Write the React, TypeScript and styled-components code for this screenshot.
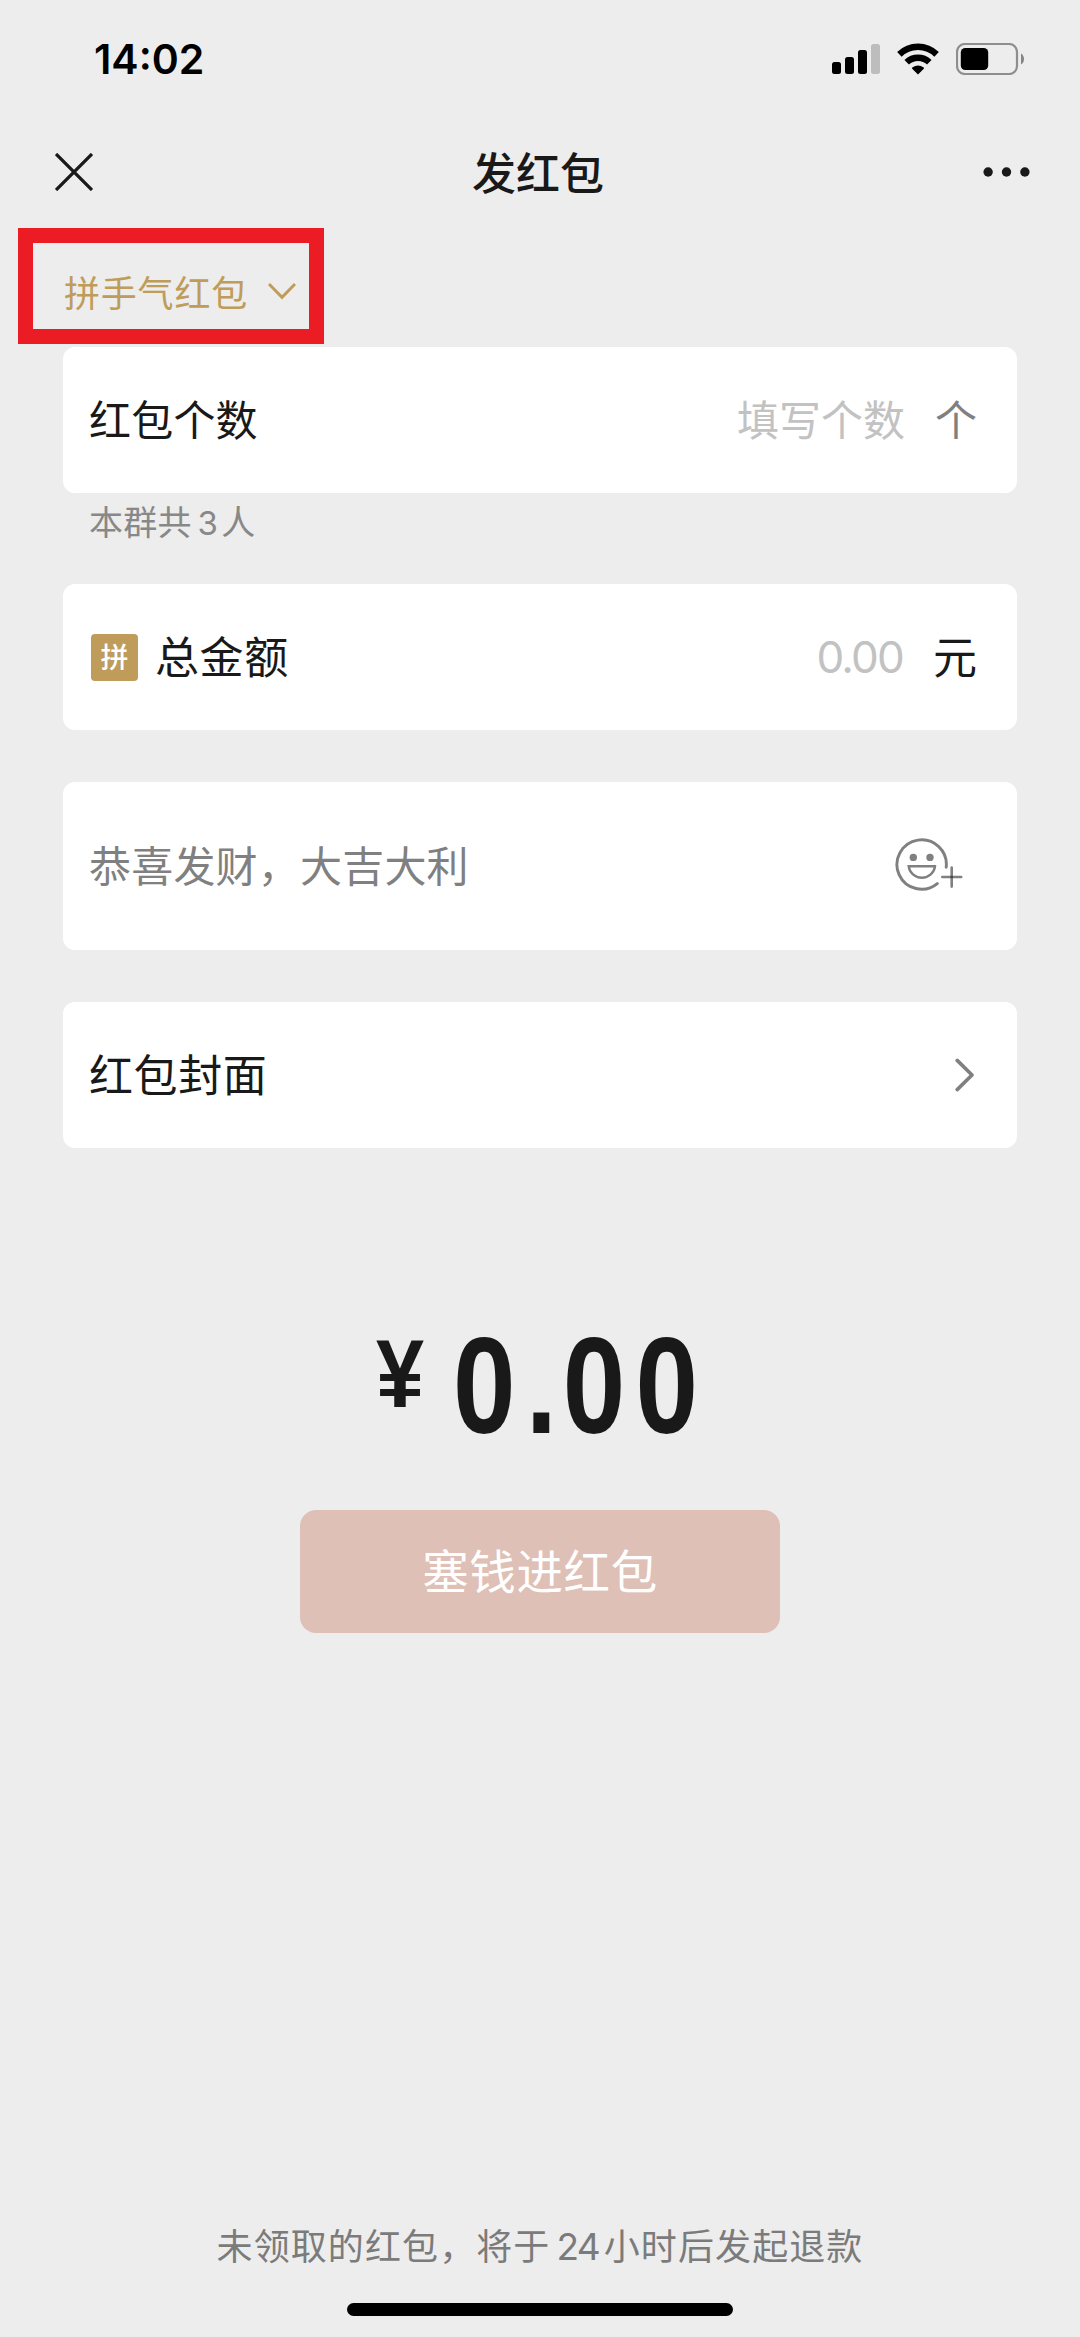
import React from 'react';
import styled, { createGlobalStyle } from 'styled-components';

const cjk = `'Noto Sans CJK SC', 'Noto Sans', sans-serif`;
const latin = `Inter, 'Liberation Sans', 'Noto Sans CJK SC', sans-serif`;

const GlobalStyle = createGlobalStyle`
  * { box-sizing: border-box; }
  html, body { margin: 0; padding: 0; background: #ededed; }
  body { font-family: ${cjk}; color: #191919; }
`;

const Screen = styled.div`
  width: 1080px;
  height: 2337px;
  display: flex;
  flex-direction: column;
  background: #ededed;
  overflow: hidden;
`;

const StatusBar = styled.header`
  height: 118px;
  padding: 0 55px 0 94px;
  display: flex;
  align-items: center;
  justify-content: space-between;
`;

const Clock = styled.time`
  font: 600 41px/50px ${latin};
  letter-spacing: 0;
  color: #000;
`;

const StatusIcons = styled.div`
  display: flex;
  align-items: center;
  gap: 17px;
  svg { display: block; }
`;

const NavBar = styled.nav`
  height: 110px;
  padding: 0 50px 2px 55px;
  display: grid;
  grid-template-columns: 1fr auto 1fr;
  align-items: center;
  svg { display: block; }
`;

const NavTitle = styled.h1`
  margin: 0;
  font-size: 44px;
  font-weight: 500;
  line-height: 60px;
  padding: 0 9px 3px 0;
`;

const NavEnd = styled.div`
  display: flex;
  justify-content: flex-end;
`;

const Content = styled.main`
  flex: 1;
  padding: 0 63px;
  display: flex;
  flex-direction: column;
`;

const TypePicker = styled.div`
  position: relative;
  height: 119px;
  padding: 6px 0 0 1px;
  display: flex;
  align-items: center;
  gap: 20px;
  color: #bf9c59;
  font-size: 36px;
  line-height: 48px;
  letter-spacing: 0.8px;
  svg { display: block; }
`;

const Highlight = styled.div`
  position: absolute;
  left: -45px;
  top: 0;
  width: 306px;
  height: 116px;
  border: 15px solid #ec1c24;
`;

const Card = styled.section<{ $height?: number; $gap?: number }>`
  height: ${p => p.$height ?? 146}px;
  margin-bottom: ${p => p.$gap ?? 52}px;
  padding: 0 40px 0 26px;
  display: flex;
  flex-shrink: 0;
  align-items: center;
  border-radius: 12px;
  background: #fff;
  svg { display: block; }
`;

const Label = styled.span<{ $size?: number; $muted?: boolean }>`
  flex: 1;
  font-size: ${p => p.$size ?? 44}px;
  line-height: 60px;
  letter-spacing: ${p => (p.$size ? 0.2 : 0.6)}px;
  padding-bottom: 5px;
  color: ${p => (p.$muted ? '#808080' : '#191919')};
`;

const Placeholder = styled.span<{ $numeric?: boolean }>`
  font-family: ${p => (p.$numeric ? latin : cjk)};
  font-size: ${p => (p.$numeric ? 44 : 42)}px;
  font-weight: 400;
  line-height: 60px;
  letter-spacing: ${p => (p.$numeric ? '-1.8px' : '0')};
  padding-bottom: ${p => (p.$numeric ? 0 : 5)}px;
  color: #c2c2c2;
`;

const Unit = styled.span<{ $size: number; $color: string }>`
  margin-left: 30px;
  font-size: ${p => p.$size}px;
  line-height: 60px;
  padding-bottom: 5px;
  color: ${p => p.$color};
`;

const Hint = styled.p`
  margin: -52px 0 0;
  padding: 4px 0 0 26px;
  height: 91px;
  flex-shrink: 0;
  font-size: 34px;
  line-height: 48px;
  letter-spacing: 0.2px;
  color: #888;
`;

const HintNumber = styled.span`
  font-family: ${latin};
  font-size: 33px;
  margin: 0 3px 0 6px;
`;

const Badge = styled.span`
  width: 47px;
  height: 47px;
  margin: 0 17px 0 2px;
  display: flex;
  align-items: center;
  justify-content: center;
  border-radius: 4px;
  background: #bf9c59;
  color: #fff;
  font-size: 28px;
  font-weight: 500;
  line-height: 44px;
  padding-bottom: 3px;
`;

const Amount = styled.div`
  height: 98px;
  margin: 137px 0 74px;
  flex-shrink: 0;
  display: flex;
  align-items: flex-start;
  padding-left: 313px;
  font-family: 'Liberation Sans', Arial, sans-serif;
  font-weight: 700;
`;

const Currency = styled.span`
  width: 77px;
  font-size: 96px;
  line-height: 72px;
  transform: scaleX(0.9);
  transform-origin: left top;
`;

const Digits = styled.span`
  font-size: 137px;
  line-height: 95px;
  letter-spacing: 12.5px;
  transform: scaleX(0.82);
  transform-origin: left top;
`;

const DecimalPoint = styled.span`
  letter-spacing: 7px;
`;

const SubmitButton = styled.button`
  align-self: center;
  width: 480px;
  height: 123px;
  flex-shrink: 0;
  margin: 0;
  padding: 0 0 5px;
  border: 0;
  border-radius: 16px;
  background: #dfc0b6;
  color: #fff;
  font: 400 46.5px/60px ${cjk};
  letter-spacing: 0.6px;
`;

const Footer = styled.footer`
  height: 137px;
  display: flex;
  flex-direction: column;
  align-items: center;
  justify-content: space-between;
  padding: 19px 0 21px;
`;

const Notice = styled.p`
  margin: 0;
  font-size: 36px;
  line-height: 50px;
  letter-spacing: 1.1px;
  white-space: nowrap;
  color: #7b7b7b;
`;

const NoticeNumber = styled.span`
  font-family: ${latin};
  font-size: 37px;
  letter-spacing: -1.8px;
  margin: 0 5px 0 6px;
`;

const HomeIndicator = styled.div`
  width: 386px;
  height: 13px;
  border-radius: 7px;
  background: #000;
`;

const SignalIcon = () => (
  <svg width="48" height="30" viewBox="0 0 48 30">
    <rect x="0" y="18" width="9" height="12" rx="2.5" />
    <rect x="13" y="13" width="9" height="17" rx="2.5" />
    <rect x="26" y="6" width="9" height="24" rx="2.5" />
    <rect x="39" y="0" width="9" height="30" rx="2.5" fill="#bdbdbd" />
  </svg>
);

const WifiIcon = () => (
  <svg width="42" height="32" viewBox="0 0 42 32">
    <g fill="none" stroke="#000" strokeWidth="6.4">
      <path d="M2.4 11.4a26.5 26.5 0 0 1 37.2 0" />
      <path d="M9.7 19.3a16.2 16.2 0 0 1 22.6 0" />
    </g>
    <path d="M21 31.6l-5.8-5.9q-.6-.7.1-1.2a9.8 9.8 0 0 1 11.4 0q.7.5.1 1.2z" />
  </svg>
);

const BatteryIcon = () => (
  <svg width="69" height="32" viewBox="0 0 69 32">
    <rect x="1" y="1" width="60" height="30" rx="8" fill="none" stroke="#8e8e8e" strokeWidth="2.2" />
    <rect x="4.8" y="5" width="27.4" height="22" rx="4.5" />
    <path d="M65 10.5q3 2 3 5.5t-3 5.5z" fill="#858585" />
  </svg>
);

const CloseIcon = () => (
  <svg width="38" height="38" viewBox="0 0 38 38" fill="none" stroke="#191919" strokeWidth="3.3">
    <path d="M1 1l36 36M37 1L1 37" />
  </svg>
);

const MoreIcon = () => (
  <svg width="47" height="10" viewBox="0 0 47 10" fill="#191919">
    <circle cx="5.1" cy="5" r="4.7" />
    <circle cx="23.5" cy="5" r="4.7" />
    <circle cx="41.9" cy="5" r="4.7" />
  </svg>
);

const ChevronDown = () => (
  <svg width="28" height="18" viewBox="0 0 28 18" fill="none" stroke="#bf9c59" strokeWidth="3">
    <path d="M1 2l13 13.3L27 2" />
  </svg>
);

const ChevronRight = () => (
  <svg width="22" height="34" viewBox="0 0 22 34" fill="none" stroke="#808080" strokeWidth="3.6" strokeLinecap="round" strokeLinejoin="round">
    <path d="M2.2 2.4L17 17 2.2 31.6" />
  </svg>
);

const EmojiAddIcon = () => (
  <svg width="68" height="54" viewBox="0 0 68 54" fill="none" stroke="#808080" strokeWidth="2.9" strokeLinecap="round">
    <path d="M51.2 30.2A24.7 24.7 0 1 0 42.3 46.6" />
    <path d="M13.7 29.2H40A13.2 12.7 0 0 1 13.7 29.2z" strokeWidth="2.4" />
    <circle cx="18.3" cy="20.4" r="3.7" fill="#808080" stroke="none" />
    <circle cx="35" cy="20.4" r="3.7" fill="#808080" stroke="none" />
    <path d="M47.3 40H66.2M56.7 30.6V49.6" strokeWidth="2.6" />
    <path d="M56.7 38.8V41.2" stroke="#444" strokeWidth="2.4" strokeLinecap="butt" />
  </svg>
);

const EmojiSlot = styled.div`
  padding: 0 14px 4px 0;
`;

export default function App() {
  return (
    <>
      <GlobalStyle />
      <Screen>
        <StatusBar>
          <Clock>14:02</Clock>
          <StatusIcons>
            <SignalIcon />
            <WifiIcon />
            <BatteryIcon />
          </StatusIcons>
        </StatusBar>
        <NavBar>
          <CloseIcon />
          <NavTitle>发红包</NavTitle>
          <NavEnd>
            <MoreIcon />
          </NavEnd>
        </NavBar>
        <Content>
          <TypePicker>
            <span>拼手气红包</span>
            <ChevronDown />
            <Highlight />
          </TypePicker>
          <Card>
            <Label $size={42}>红包个数</Label>
            <Placeholder>填写个数</Placeholder>
            <Unit $size={42} $color="#808080">个</Unit>
          </Card>
          <Hint>
            本群共<HintNumber>3</HintNumber>人
          </Hint>
          <Card>
            <Badge>拼</Badge>
            <Label>总金额</Label>
            <Placeholder $numeric>0.00</Placeholder>
            <Unit $size={44} $color="#191919">元</Unit>
          </Card>
          <Card $height={168}>
            <Label $size={42} $muted>恭喜发财，大吉大利</Label>
            <EmojiSlot>
              <EmojiAddIcon />
            </EmojiSlot>
          </Card>
          <Card $gap={53}>
            <Label>红包封面</Label>
            <ChevronRight />
          </Card>
          <Amount>
            <Currency>¥</Currency>
            <Digits>
              0<DecimalPoint>.</DecimalPoint>00
            </Digits>
          </Amount>
          <SubmitButton type="button">塞钱进红包</SubmitButton>
        </Content>
        <Footer>
          <Notice>
            未领取的红包，将于<NoticeNumber>24</NoticeNumber>小时后发起退款
          </Notice>
          <HomeIndicator />
        </Footer>
      </Screen>
    </>
  );
}
